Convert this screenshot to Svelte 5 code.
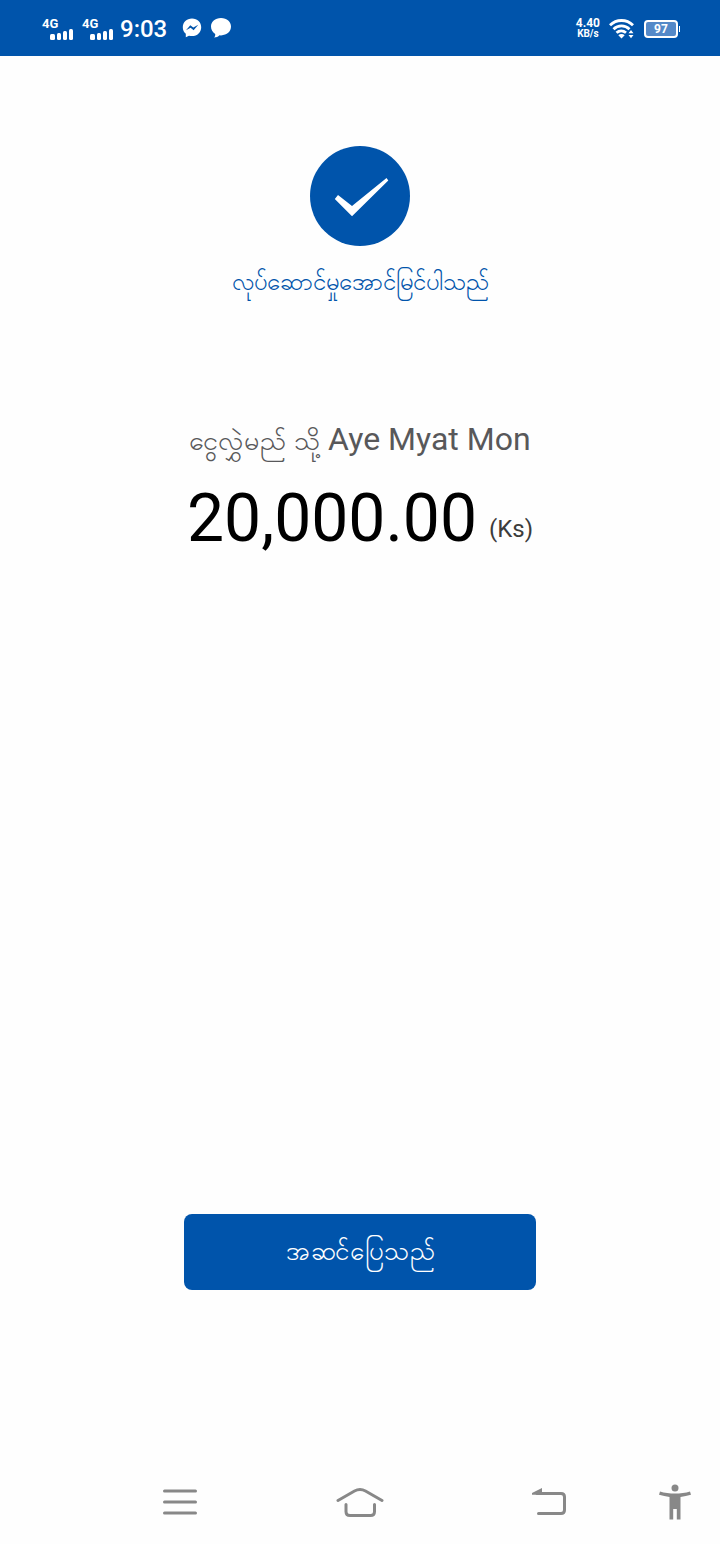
<script>
  const signals = ['4G', '4G'];
</script>

<div class="screen">
  <header>
    <div class="group">
      {#each signals as label}
        <div class="signal">
          <span>{label}</span>
          <svg width="24" height="11" viewBox="0 0 24 11" fill="currentColor" aria-hidden="true">
            <rect x="0" y="5" width="5" height="6" rx="1.5" />
            <rect x="7" y="4" width="4" height="7" rx="1.5" />
            <rect x="13" y="2" width="4" height="9" rx="1.5" />
            <rect x="19" y="0" width="4" height="11" rx="1.5" />
          </svg>
        </div>
      {/each}
      <time>9:03</time>
      <div class="notices">
        <svg width="20" height="20" viewBox="0 0 20 20" aria-hidden="true">
          <path fill="#fff" d="M10 .5C4.600.5.800 4.300.800 9.200c0 2.700 1.100 4.900 3 6.500v3.600l3.200-1.600c1 .3 2 .4 3 .4 5.400 0 9.200-3.900 9.200-8.900S15.400.5 10 .5z" />
          <path fill="#0054ab" d="M4 12.300 8.300 7.300l3 2.300 5-2.800-4.700 5.400-3-2.500z" />
        </svg>
        <svg width="22" height="20" viewBox="0 0 22 20" aria-hidden="true">
          <path fill="#fff" d="M11 0C5 0 1 3.700 1 8.600c0 3.200 1.600 5.700 4.200 7.300.2 1.600-.2 2.700-1.300 3.700 2.400-.1 4.300-.9 5.600-2.300l1.500.1c6 0 10-3.900 10-8.800S17 0 11 0z" />
        </svg>
      </div>
    </div>
    <div class="group">
      <div class="speed"><span>4.40</span><small>KB/s</small></div>
      <svg class="wifi" width="26" height="22" viewBox="0 0 26 22" aria-hidden="true">
        <g fill="none" stroke="#fff" stroke-width="2.800">
          <path d="M1 7.300c6.400-6.400 16.600-6.400 23 0" />
          <path d="M4.500 11.200c4.500-4.400 11.500-4.400 16 0" />
          <path d="M7.500 14.800c2.800-2.500 6.700-2.500 9.500 0" />
        </g>
        <path fill="#fff" d="M9.300 17.200c1.800-1.500 4.600-1.500 6.400 0l-3.200 3.300zM19.500 15.300l2.500-3.200 2.500 3.200zM19.500 17h5L22 20.200z" />
      </svg>
      <div class="battery">97</div>
    </div>
  </header>

  <main>
    <svg class="done" width="100" height="100" viewBox="0 0 100 100" role="img" aria-label="✓">
      <circle cx="50" cy="50" r="50" fill="#0054ab" />
      <path fill="#fff" d="M24.800 53 28 49 42 60 76.500 32 78.300 34.500 42 70.300z" />
    </svg>
    <p class="status">လုပ်ဆောင်မှုအောင်မြင်ပါသည်</p>
    <p class="payee"><span>ငွေလွှဲမည် သို့</span> Aye Myat Mon</p>
    <p class="amount">20,000.00 <span>(Ks)</span></p>
    <button class="confirm">အဆင်ပြေသည်</button>
  </main>

  <nav>
    <button aria-label="Recent apps">
      <svg width="34" height="28" viewBox="0 0 34 28"><path d="M1.500 3h31M1.500 14h31M1.500 25h31" /></svg>
    </button>
    <button aria-label="Home">
      <svg width="48" height="32" viewBox="0 0 48 32">
        <path d="M2 14.500 18.500 5Q24 2 29.500 5L46 14.500M10 18.500v7q0 4 4 4h20.500q4 0 4-4v-7" />
      </svg>
    </button>
    <button aria-label="Back">
      <svg width="36" height="30" viewBox="0 0 36 30">
        <path d="M6 6.500h24q3.500 0 3.500 3.500v13q0 3.500-3.500 3.500H7.500" />
        <path class="solid" d="M1 7.800V6L11 1v6.800z" />
      </svg>
    </button>
    <button aria-label="Accessibility">
      <svg width="32" height="36" viewBox="0 0 32 36">
        <g class="solid">
          <circle cx="16" cy="4" r="3.500" />
          <path d="M1 7.500C10 10.200 22 10.200 31 7.500l1 3.300c-3.500 1-7 1.700-10.500 2.100V35.500h-3.700V25h-3.600v10.500h-3.700V12.900C7 12.500 3.500 11.800 0 10.800z" />
        </g>
      </svg>
    </button>
  </nav>
</div>

<style>
  :global(body) {
    margin: 0;
    background: #fefefe;
  }

  .screen {
    min-height: 100vh;
    display: flex;
    flex-direction: column;
    font-family: Roboto, "Noto Sans", sans-serif;
  }

  header {
    box-sizing: border-box;
    height: 56px;
    padding: 2px 40px 0 42px;
    display: flex;
    align-items: center;
    justify-content: space-between;
    background: #0054ab;
    color: #fff;
  }

  .group,
  .notices {
    display: flex;
    align-items: center;
  }

  .signal {
    display: flex;
    flex-direction: column;
    width: 32px;
    margin-right: 8px;
    font-size: 13px;
    line-height: 10px;
    font-weight: 700;
  }

  .signal svg {
    align-self: flex-end;
  }

  time {
    margin-left: -2px;
    font-size: 24px;
    line-height: 28px;
    font-weight: 500;
  }

  .notices {
    gap: 8px;
    margin: 0 0 2px 15px;
  }

  .speed {
    display: flex;
    flex-direction: column;
    align-items: center;
    margin-bottom: 2px;
    font-size: 12px;
    line-height: 12px;
    font-weight: 700;
  }

  .speed small {
    font-size: 10px;
    line-height: 10px;
  }

  .wifi {
    margin: 0 9px;
  }

  .battery {
    position: relative;
    box-sizing: border-box;
    width: 34px;
    height: 18px;
    margin-right: 2px;
    border: 2px solid #fff;
    border-radius: 4px;
    background: #5489c8;
    font-size: 12px;
    line-height: 15px;
    font-weight: 700;
    text-align: center;
  }

  .battery::after {
    content: "";
    position: absolute;
    top: 4px;
    right: -4px;
    width: 1px;
    height: 6px;
    background: #fff;
  }

  main {
    flex: 1;
    display: flex;
    flex-direction: column;
    align-items: center;
    padding: 90px 24px 170px;
  }

  p {
    margin: 0;
  }

  .status {
    margin-top: 16px;
    color: #0054ab;
    font-size: 24px;
    line-height: 40px;
  }

  .payee {
    margin-top: 115px;
    color: #58585a;
    font-size: 32px;
    line-height: 44px;
  }

  .payee span {
    font-size: 27px;
  }

  .amount {
    display: flex;
    align-items: flex-end;
    gap: 12px;
    margin-top: 16px;
    color: #000;
    font-size: 66px;
    line-height: 80px;
  }

  .amount span {
    color: #3c3c3c;
    font-size: 24px;
    line-height: 60px;
  }

  .confirm {
    width: 352px;
    max-width: 100%;
    height: 76px;
    margin-top: auto;
    padding: 2px 0 0;
    border: 0;
    border-radius: 8px;
    background: #0054ab;
    color: #fff;
    font: 26px Roboto, "Noto Sans", sans-serif;
  }

  nav {
    height: 84px;
    display: grid;
    grid-template-columns: 10fr 10fr 11fr 3fr;
    padding: 0 18px 0 90px;
  }

  nav button {
    display: grid;
    place-items: center;
    padding: 0;
    border: 0;
    background: none;
  }

  nav svg {
    fill: none;
    stroke: #888;
    stroke-width: 3;
    stroke-linecap: round;
  }

  nav .solid {
    fill: #888;
    stroke: none;
  }
</style>
